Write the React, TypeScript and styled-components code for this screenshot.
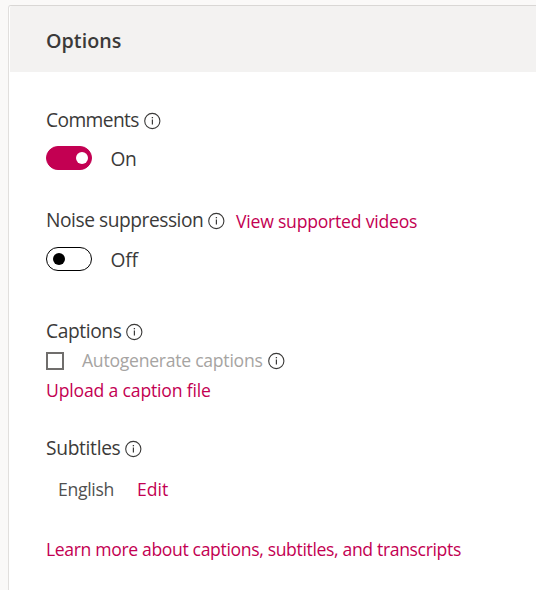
import React from "react";
import styled, { createGlobalStyle } from "styled-components";

const GlobalStyle = createGlobalStyle`
  * { box-sizing: border-box; }
  html, body { margin: 0; height: 100%; overflow: hidden; background: #faf9f8; }
  body { font-family: "Open Sans", "Noto Sans", sans-serif; font-weight: 400; color: #3b3a39; }
`;

const Page = styled.main`
  height: 590px;
  padding: 5px 0 0 8px;
  overflow: hidden;
`;

const Card = styled.section`
  height: 600px;
  border: 1px solid #e1dfdd;
  border-right: 0;
  border-top-color: #d9d7d5;
  border-radius: 3px 0 0 0;
  background: #fff;
`;

const Header = styled.header`
  height: 66px;
  margin-left: 1px;
  padding: 20px 0 0 36px;
  background: #f3f2f1;
  border-radius: 2px 0 0 0;
`;

const Title = styled.h2`
  margin: 0;
  font-size: 19.7px;
  font-weight: 600;
  line-height: 30px;
  letter-spacing: 0.05px;
`;

const Body = styled.div`
  padding: 33px 0 0 37px;
`;

const Group = styled.section<{ $gap: number }>`
  margin-bottom: ${(p) => p.$gap}px;
`;

const Row = styled.div<{ $gap?: number }>`
  display: flex;
  height: 30px;
  margin-top: ${(p) => p.$gap ?? 0}px;
  line-height: 30px;
  white-space: nowrap;
`;

const Label = styled.span<{ $width: number; $track?: number }>`
  flex: none;
  width: ${(p) => p.$width}px;
  font-size: 19.2px;
  letter-spacing: ${(p) => p.$track ?? 0}px;
`;

const Option = styled(Label)`
  font-size: 17.6px;
  color: #a6a4a2;
`;

const Language = styled(Label)`
  font-size: 17.6px;
  color: #505050;
  margin-left: 12px;
`;

const Link = styled.a<{ $track?: number; $indent?: number; $drop?: number }>`
  margin-left: ${(p) => p.$indent ?? 0}px;
  margin-top: ${(p) => p.$drop ?? 0}px;
  font-size: 17.6px;
  letter-spacing: ${(p) => p.$track ?? 0}px;
  color: #c30052;
  text-decoration: none;
  cursor: pointer;
`;

const Switch = styled.button<{ $on?: boolean }>`
  display: flex;
  flex: none;
  align-items: center;
  justify-content: ${(p) => (p.$on ? "flex-end" : "flex-start")};
  width: 46px;
  height: 24px;
  margin: 2px 18.5px 0 0;
  padding: 0 ${(p) => (p.$on ? 3 : 6)}px;
  border: 1px solid ${(p) => (p.$on ? "#c30052" : "#000")};
  border-radius: 12px;
  background: ${(p) => (p.$on ? "#c30052" : "#fff")};
`;

const Thumb = styled.span<{ $on?: boolean }>`
  width: 12px;
  height: 12px;
  border-radius: 50%;
  background: ${(p) => (p.$on ? "#fff" : "#000")};
`;

const Checkbox = styled.span`
  flex: none;
  width: 18px;
  height: 18px;
  margin: 7px 18px 0 0;
  border: 2px solid #706e6c;
`;

const InfoSvg = styled.svg`
  flex: none;
  width: 18px;
  height: 18px;
  margin-top: 7px;
`;

const Info = () => (
  <InfoSvg viewBox="0 0 18 18" fill="none" aria-label="Info">
    <circle cx="9.3" cy="9" r="7.6" stroke="#3b3a39" strokeWidth="1.1" />
    <path d="M9.4 7.5v5" stroke="#3b3a39" strokeWidth="1.2" />
    <path d="M9.4 5v1.3" stroke="#3b3a39" strokeWidth="1.3" />
  </InfoSvg>
);

const Toggle = ({ on }: { on?: boolean }) => (
  <Switch $on={on} role="switch" aria-checked={!!on}>
    <Thumb $on={on} />
  </Switch>
);

export default function App() {
  return (
    <Page>
      <GlobalStyle />
      <Card>
        <Header>
          <Title>Options</Title>
        </Header>
        <Body>
          <Group $gap={31}>
            <Row>
              <Label $width={97} $track={-0.6}>Comments</Label>
              <Info />
            </Row>
            <Row $gap={9}>
              <Toggle on />
              <Label $width={40} $track={-0.3}>On</Label>
            </Row>
          </Group>
          <Group $gap={41}>
            <Row>
              <Label $width={161} $track={-0.46}>Noise suppression</Label>
              <Info />
              <Link $indent={11} $drop={1} $track={-0.22}>View supported videos</Link>
            </Row>
            <Row $gap={10}>
              <Toggle />
              <Label $width={40} $track={-0.2}>Off</Label>
            </Row>
          </Group>
          <Group $gap={28}>
            <Row>
              <Label $width={79} $track={-0.4}>Captions</Label>
              <Info />
            </Row>
            <Row $gap={-1}>
              <Checkbox role="checkbox" aria-checked="false" />
              <Option $width={185} $track={-0.26}>Autogenerate captions</Option>
              <Info />
            </Row>
            <Row>
              <Link $track={-0.17}>Upload a caption file</Link>
            </Row>
          </Group>
          <Group $gap={30}>
            <Row>
              <Label $width={78} $track={-0.32}>Subtitles</Label>
              <Info />
            </Row>
            <Row $gap={11}>
              <Language $width={79} $track={-0.3}>English</Language>
              <Link>Edit</Link>
            </Row>
          </Group>
          <Row>
            <Link $track={-0.355}>Learn more about captions, subtitles, and transcripts</Link>
          </Row>
        </Body>
      </Card>
    </Page>
  );
}
